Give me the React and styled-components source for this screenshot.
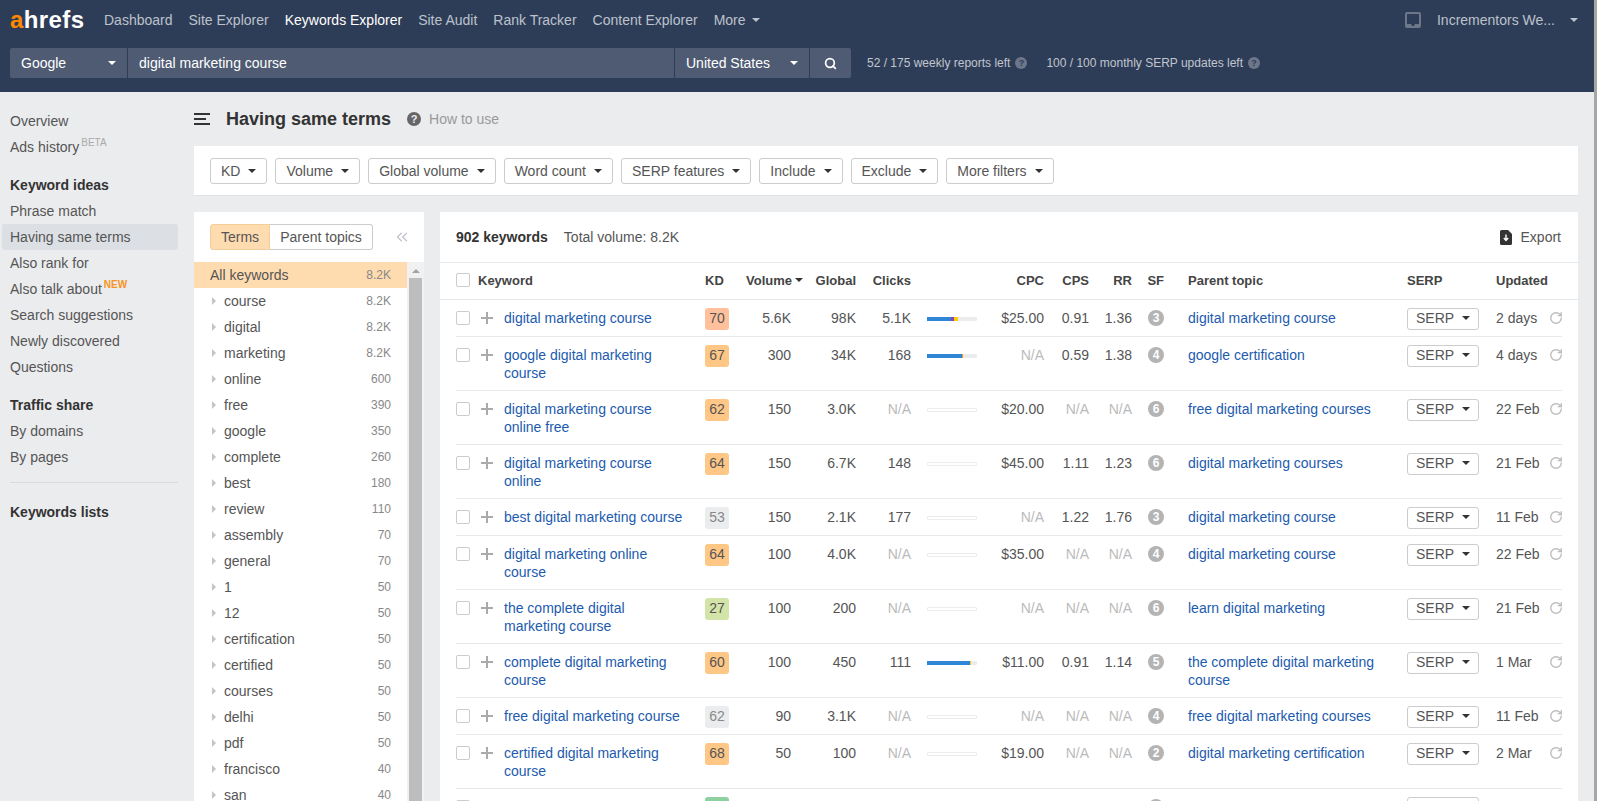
import React from 'react';
import styled, { createGlobalStyle } from 'styled-components';
import { ChevronsLeft, RotateCw, Search } from 'lucide-react';

const GlobalStyle = createGlobalStyle`
    html, body {
        margin: 0;
        height: 100%;
        overflow: hidden;
        background: #ebecee;
        font-family: 'Liberation Sans', Arial, sans-serif;
        font-size: 14px;
        color: #555;
    }
`;

const Screen = styled.div`
    display: flex;
    height: 801px;
    overflow: hidden;
`;

const Page = styled.div`
    flex: 1;
    min-width: 0;
    display: flex;
    flex-direction: column;
`;

const PageScrollbar = styled.div`
    width: 3px;
    background: #a6a6a6;
`;

const Header = styled.header`
    height: 92px;
    box-sizing: border-box;
    background: #2e3d57;
    padding: 0 16px 0 10px;
`;

const NavRow = styled.div`
    height: 40px;
    display: flex;
    align-items: center;
    color: #bcc2cd;
`;

const Logo = styled.div`
    width: 94px;
    font-size: 24px;
    font-weight: 700;
    letter-spacing: 0.4px;
    color: #fff;
    line-height: 36px;
    span {
        color: #ff8800;
    }
`;

const NavLink = styled.a`
    margin-right: 16px;
    color: ${(p) => (p.$active ? '#fff' : '#bcc2cd')};
    display: flex;
    align-items: center;
    gap: 6px;
`;

const Caret = styled.i`
    display: inline-block;
    width: 0;
    height: 0;
    flex: none;
    border-left: ${(p) => p.$size || 4}px solid transparent;
    border-right: ${(p) => p.$size || 4}px solid transparent;
    border-top: ${(p) => p.$size || 4}px solid ${(p) => p.$color || '#333'};
`;

const Account = styled.div`
    margin-left: auto;
    display: flex;
    align-items: center;
    color: #bcc2cd;
`;

const AccountName = styled.span`
    margin: 0 15px 0 16px;
`;

const SearchRow = styled.div`
    margin-top: 8px;
    display: flex;
    align-items: center;
    height: 30px;
    color: #fff;
`;

const SearchCell = styled.div`
    width: ${(p) => p.$width}px;
    height: 30px;
    box-sizing: border-box;
    background: #4e5b72;
    margin-right: 1px;
    padding: 0 11px;
    display: flex;
    align-items: center;
    justify-content: space-between;
    &:first-child {
        border-radius: 2px 0 0 2px;
    }
`;

const SearchButton = styled.button`
    width: 41px;
    height: 30px;
    border: 0;
    padding: 0;
    background: #4e5b72;
    border-radius: 0 2px 2px 0;
    color: #fff;
    display: flex;
    align-items: center;
    justify-content: center;
`;

const Quota = styled.div`
    margin-left: ${(p) => p.$left}px;
    display: flex;
    align-items: center;
    gap: 5px;
    font-size: 12px;
    color: #c0c5cf;
`;

const HelpDot = styled.span`
    width: ${(p) => p.$size}px;
    height: ${(p) => p.$size}px;
    border-radius: 50%;
    background: ${(p) => p.$bg};
    color: ${(p) => p.$fg};
    font-size: ${(p) => p.$size - 3}px;
    font-weight: 700;
    line-height: ${(p) => p.$size}px;
    text-align: center;
    flex: none;
`;

const Body = styled.div`
    flex: 1;
    min-height: 0;
    display: flex;
`;

const Sidebar = styled.nav`
    width: 194px;
    flex: none;
    box-sizing: border-box;
    padding: 16px 16px 0 2px;
`;

const SideGroup = styled.div`
    margin-bottom: ${(p) => p.$gap}px;
`;

const SideItem = styled.div`
    height: 26px;
    line-height: 26px;
    padding-left: 8px;
    border-radius: 3px;
    color: ${(p) => (p.$bold ? '#333' : '#555')};
    font-weight: ${(p) => (p.$bold ? 700 : 400)};
    background: ${(p) => (p.$active ? '#dcdfe4' : 'transparent')};
`;

const Sup = styled.sup`
    font-size: 10px;
    line-height: 0;
    vertical-align: 6px;
    margin-left: 2px;
    font-weight: ${(p) => (p.$new ? 700 : 400)};
    color: ${(p) => (p.$new ? '#f7931e' : '#aaa')};
`;

const SideRule = styled.hr`
    border: 0;
    border-top: 1px solid #d9dbdf;
    margin: 0 0 16px 8px;
`;

const Content = styled.main`
    flex: 1;
    min-width: 0;
    padding-right: 16px;
    display: flex;
    flex-direction: column;
`;

const TitleRow = styled.div`
    height: 54px;
    display: flex;
    align-items: center;
`;

const Title = styled.h1`
    margin: 0 16px 0 16px;
    font-size: 18px;
    line-height: 54px;
    color: #333;
`;

const HowTo = styled.span`
    margin-left: 8px;
    color: #999;
`;

const FilterBar = styled.div`
    height: 50px;
    box-sizing: border-box;
    flex: none;
    background: #fff;
    border-bottom: 1px solid #e2e3e6;
    padding: 12px 16px;
    display: flex;
    gap: 8px;
`;

const FilterButton = styled.button`
    height: 26px;
    box-sizing: border-box;
    padding: 0 10px;
    display: flex;
    align-items: center;
    gap: 8px;
    background: #fff;
    border: 1px solid #ccc;
    border-radius: 3px;
    color: #555;
    font: inherit;
`;

const Panels = styled.div`
    flex: 1;
    min-height: 0;
    margin-top: 16px;
    display: flex;
    gap: 16px;
`;

const TermsPanel = styled.aside`
    width: 230px;
    flex: none;
    background: #fff;
    display: flex;
    flex-direction: column;
    overflow: hidden;
`;

const TabsRow = styled.div`
    height: 50px;
    box-sizing: border-box;
    flex: none;
    padding: 12px 16px;
    display: flex;
    align-items: flex-start;
`;

const Tab = styled.div`
    height: 26px;
    box-sizing: border-box;
    padding: 0 10px;
    line-height: 24px;
    background: ${(p) => (p.$on ? '#ffdbb0' : '#fff')};
    border: 1px solid ${(p) => (p.$on ? '#f5cd9b' : '#ccc')};
    border-left-width: ${(p) => (p.$on ? 1 : 0)}px;
    border-radius: ${(p) => (p.$on ? '3px 0 0 3px' : '0 3px 3px 0')};
`;

const Collapse = styled.span`
    margin-left: auto;
    margin-right: -3px;
    height: 26px;
    display: flex;
    align-items: center;
    color: #c4c8ce;
`;

const TermsBody = styled.div`
    flex: 1;
    min-height: 0;
    display: flex;
`;

const TermsList = styled.div`
    flex: 1;
    min-width: 0;
`;

const TermRow = styled.div`
    height: 26px;
    box-sizing: border-box;
    padding: 0 16px;
    display: flex;
    align-items: center;
    background: ${(p) => (p.$on ? '#ffdbb0' : '#fff')};
`;

const TermArrow = styled.i`
    width: 0;
    height: 0;
    margin: 0 8px 0 2px;
    border-top: 4px solid transparent;
    border-bottom: 4px solid transparent;
    border-left: 4px solid #c4c4c4;
`;

const TermCount = styled.span`
    margin-left: auto;
    font-size: 12px;
    color: #888;
`;

const TermsTrack = styled.div`
    width: 17px;
    flex: none;
    background: #f1f1f1;
    display: flex;
    flex-direction: column;
    align-items: center;
`;

const TrackArrow = styled.i`
    width: 0;
    height: 0;
    margin: 7px 0 5px;
    border-left: 4px solid transparent;
    border-right: 4px solid transparent;
    border-bottom: 4px solid #a3a3a3;
`;

const TrackThumb = styled.div`
    width: 13px;
    flex: 1;
    background: #bdbdbd;
`;

const TablePanel = styled.section`
    flex: 1;
    min-width: 0;
    background: #fff;
    overflow: hidden;
`;

const TableTop = styled.div`
    height: 51px;
    box-sizing: border-box;
    padding: 0 17px 0 16px;
    border-bottom: 1px solid #e8e9eb;
    display: flex;
    align-items: center;
`;

const Count = styled.strong`
    color: #333;
    margin-right: 16px;
`;

const Export = styled.span`
    margin-left: auto;
    display: flex;
    align-items: center;
    gap: 9px;
`;

const columns = '22px 26px 201px 24px 62px 65px 55px 66px 67px 45px 43px 32px 243px 72px 70px 13px';

const HeadRow = styled.div`
    display: grid;
    grid-template-columns: ${columns};
    align-items: center;
    height: 37px;
    box-sizing: border-box;
    padding: 0 16px 2px;
    border-bottom: 1px solid #e8e9eb;
    font-size: 13px;
    font-weight: 700;
    color: #444;
`;

const HeadCell = styled.div`
    grid-column: ${(p) => p.$col};
    text-align: ${(p) => (p.$right ? 'right' : 'left')};
    padding-left: ${(p) => p.$pad || 0}px;
    white-space: nowrap;
`;

const VolumeHead = styled.div`
    grid-column: 5;
    margin-right: -12px;
    display: flex;
    justify-content: flex-end;
    align-items: center;
    gap: 3px;
`;

const Row = styled.div`
    display: grid;
    grid-template-columns: ${columns};
    align-items: start;
    margin: 0 16px;
    padding: 8px 0 6px;
    border-bottom: 1px solid #e8e9eb;
    line-height: 18px;
`;

const CheckBox = styled.span`
    display: block;
    width: 14px;
    height: 14px;
    box-sizing: border-box;
    border: 1px solid #ccc;
    border-radius: 2px;
    background: #fff;
    margin-top: ${(p) => p.$top || 0}px;
`;

const PlusIcon = styled.svg`
    display: block;
    margin: 4px 0 0 3px;
`;

const Keyword = styled.a`
    display: block;
    padding: 1px 16px 2px 0;
    color: #1c5bae;
`;

const Badge = styled.div`
    width: 24px;
    height: 22px;
    line-height: 21px;
    border-radius: 3px;
    text-align: center;
    background: ${(p) => p.$bg};
    color: ${(p) => (p.$muted ? '#888' : '#555')};
`;

const Value = styled.div`
    padding-top: 1px;
    text-align: right;
    color: ${(p) => (p.$na ? '#bbb' : '#555')};
`;

const BarTrack = styled.div`
    width: 50px;
    height: 4px;
    margin: 9px 0 0 16px;
    box-sizing: border-box;
    display: flex;
    background: ${(p) => (p.$empty ? '#fff' : '#ebecee')};
    border: ${(p) => (p.$empty ? '1px solid #ebecee' : '0')};
    border-radius: 1px;
`;

const BarPart = styled.span`
    height: 100%;
    background: ${(p) => p.$color};
`;

const SfDot = styled.div`
    justify-self: end;
    width: 16px;
    height: 16px;
    margin-top: 2px;
    border-radius: 50%;
    background: #b4b4b4;
    color: #fff;
    font-size: 12px;
    font-weight: 700;
    line-height: 16px;
    text-align: center;
`;

const Parent = styled.a`
    display: block;
    padding: 1px 16px 2px 24px;
    color: #1c5bae;
`;

const SerpButton = styled.button`
    width: 72px;
    height: 22px;
    box-sizing: border-box;
    padding: 0 8px 2px;
    display: flex;
    align-items: center;
    justify-content: space-between;
    background: #fff;
    border: 1px solid #ccc;
    border-radius: 3px;
    color: #555;
    font: inherit;
`;

const Updated = styled.div`
    padding: 1px 0 0 17px;
    white-space: nowrap;
`;

const Refresh = styled.div`
    padding-top: 3px;
    color: #bdbdbd;
`;

const terms = [
    ['course', '8.2K'], ['digital', '8.2K'], ['marketing', '8.2K'], ['online', '600'], ['free', '390'],
    ['google', '350'], ['complete', '260'], ['best', '180'], ['review', '110'], ['assembly', '70'],
    ['general', '70'], ['1', '50'], ['12', '50'], ['certification', '50'], ['certified', '50'],
    ['courses', '50'], ['delhi', '50'], ['pdf', '50'], ['francisco', '40'], ['san', '40'],
];

const filters = ['KD', 'Volume', 'Global volume', 'Word count', 'SERP features', 'Include', 'Exclude', 'More filters'];

const ORANGE = '#ffc785';
const GREY = '#ebecee';

const rows = [
    { kw: 'digital marketing course', kd: 70, bg: '#ffc09b', vol: '5.6K', global: '98K', clicks: '5.1K', bar: [[24, '#2f86d6'], [3, '#8e44ad'], [4, '#ffcc00']], cpc: '$25.00', cps: '0.91', rr: '1.36', sf: 3, parent: 'digital marketing course', date: '2 days' },
    { kw: 'google digital marketing course', kd: 67, bg: ORANGE, vol: '300', global: '34K', clicks: '168', bar: [[35, '#2f86d6'], [1, '#ff9800']], cpc: 'N/A', cps: '0.59', rr: '1.38', sf: 4, parent: 'google certification', date: '4 days' },
    { kw: 'digital marketing course online free', kd: 62, bg: ORANGE, vol: '150', global: '3.0K', clicks: 'N/A', cpc: '$20.00', cps: 'N/A', rr: 'N/A', sf: 6, parent: 'free digital marketing courses', date: '22 Feb' },
    { kw: 'digital marketing course online', kd: 64, bg: ORANGE, vol: '150', global: '6.7K', clicks: '148', cpc: '$45.00', cps: '1.11', rr: '1.23', sf: 6, parent: 'digital marketing courses', date: '21 Feb' },
    { kw: 'best digital marketing course', kd: 53, bg: GREY, muted: true, vol: '150', global: '2.1K', clicks: '177', cpc: 'N/A', cps: '1.22', rr: '1.76', sf: 3, parent: 'digital marketing course', date: '11 Feb' },
    { kw: 'digital marketing online course', kd: 64, bg: ORANGE, vol: '100', global: '4.0K', clicks: 'N/A', cpc: '$35.00', cps: 'N/A', rr: 'N/A', sf: 4, parent: 'digital marketing course', date: '22 Feb' },
    { kw: 'the complete digital marketing course', kd: 27, bg: '#d3e4a8', vol: '100', global: '200', clicks: 'N/A', cpc: 'N/A', cps: 'N/A', rr: 'N/A', sf: 6, parent: 'learn digital marketing', date: '21 Feb' },
    { kw: 'complete digital marketing course', kd: 60, bg: ORANGE, vol: '100', global: '450', clicks: '111', bar: [[43, '#2f86d6'], [1, '#ffcc00']], cpc: '$11.00', cps: '0.91', rr: '1.14', sf: 5, parent: 'the complete digital marketing course', date: '1 Mar' },
    { kw: 'free digital marketing course', kd: 62, bg: GREY, muted: true, vol: '90', global: '3.1K', clicks: 'N/A', cpc: 'N/A', cps: 'N/A', rr: 'N/A', sf: 4, parent: 'free digital marketing courses', date: '11 Feb' },
    { kw: 'certified digital marketing course', kd: 68, bg: ORANGE, vol: '50', global: '100', clicks: 'N/A', cpc: '$19.00', cps: 'N/A', rr: 'N/A', sf: 2, parent: 'digital marketing certification', date: '2 Mar' },
];

const KeywordRow = ({ row }) => (
    <Row>
        <CheckBox $top={3} />
        <PlusIcon width="12" height="12" viewBox="0 0 12 12">
            <path d="M6 0v12M0 6h12" stroke="#aaa" strokeWidth="2" />
        </PlusIcon>
        <Keyword>{row.kw}</Keyword>
        <Badge $bg={row.bg} $muted={row.muted}>{row.kd}</Badge>
        <Value>{row.vol}</Value>
        <Value>{row.global}</Value>
        <Value $na={row.clicks === 'N/A'}>{row.clicks}</Value>
        <BarTrack $empty={!row.bar}>
            {row.bar && row.bar.map(([w, c]) => <BarPart key={c} $color={c} style={{ width: w }} />)}
        </BarTrack>
        <Value $na={row.cpc === 'N/A'}>{row.cpc}</Value>
        <Value $na={row.cps === 'N/A'}>{row.cps}</Value>
        <Value $na={row.rr === 'N/A'}>{row.rr}</Value>
        <SfDot>{row.sf}</SfDot>
        <Parent>{row.parent}</Parent>
        <SerpButton>SERP <Caret /></SerpButton>
        <Updated>{row.date}</Updated>
        <Refresh><RotateCw size={14} strokeWidth={2.4} /></Refresh>
    </Row>
);

const App = () => (
    <Screen>
        <GlobalStyle />
        <Page>
            <Header>
                <NavRow>
                    <Logo><span>a</span>hrefs</Logo>
                    <NavLink>Dashboard</NavLink>
                    <NavLink>Site Explorer</NavLink>
                    <NavLink $active>Keywords Explorer</NavLink>
                    <NavLink>Site Audit</NavLink>
                    <NavLink>Rank Tracker</NavLink>
                    <NavLink>Content Explorer</NavLink>
                    <NavLink>More <Caret $color="#bcc2cd" /></NavLink>
                    <Account>
                        <svg width="16" height="16" viewBox="0 0 16 16">
                            <path fillRule="evenodd" d="M2 0h12a2 2 0 0 1 2 2v12a2 2 0 0 1-2 2H2a2 2 0 0 1-2-2V2a2 2 0 0 1 2-2zm0 2v10h4l1 2h2l1-2h4V2z" fill="#6d7789" />
                        </svg>
                        <AccountName>Incrementors We...</AccountName>
                        <Caret $color="#bcc2cd" />
                    </Account>
                </NavRow>
                <SearchRow>
                    <SearchCell $width={117}>Google <Caret $color="#fff" /></SearchCell>
                    <SearchCell $width={546}>digital marketing course</SearchCell>
                    <SearchCell $width={134}>United States <Caret $color="#fff" /></SearchCell>
                    <SearchButton><Search size={13} strokeWidth={3.2} /></SearchButton>
                    <Quota $left={16}>
                        52 / 175 weekly reports left
                        <HelpDot $size={12} $bg="#6d7789" $fg="#2e3d57">?</HelpDot>
                    </Quota>
                    <Quota $left={19}>
                        100 / 100 monthly SERP updates left
                        <HelpDot $size={12} $bg="#6d7789" $fg="#2e3d57">?</HelpDot>
                    </Quota>
                </SearchRow>
            </Header>
            <Body>
                <Sidebar>
                    <SideGroup $gap={12}>
                        <SideItem>Overview</SideItem>
                        <SideItem>Ads history<Sup>BETA</Sup></SideItem>
                    </SideGroup>
                    <SideGroup $gap={12}>
                        <SideItem $bold>Keyword ideas</SideItem>
                        <SideItem>Phrase match</SideItem>
                        <SideItem $active>Having same terms</SideItem>
                        <SideItem>Also rank for</SideItem>
                        <SideItem>Also talk about<Sup $new>NEW</Sup></SideItem>
                        <SideItem>Search suggestions</SideItem>
                        <SideItem>Newly discovered</SideItem>
                        <SideItem>Questions</SideItem>
                    </SideGroup>
                    <SideGroup $gap={12}>
                        <SideItem $bold>Traffic share</SideItem>
                        <SideItem>By domains</SideItem>
                        <SideItem>By pages</SideItem>
                    </SideGroup>
                    <SideRule />
                    <SideItem $bold>Keywords lists</SideItem>
                </Sidebar>
                <Content>
                    <TitleRow>
                        <svg width="16" height="12" viewBox="0 0 16 12">
                            <path d="M0 1h16M0 6h12M0 11h16" stroke="#333" strokeWidth="2" />
                        </svg>
                        <Title>Having same terms</Title>
                        <HelpDot $size={14} $bg="#666" $fg="#ebecee">?</HelpDot>
                        <HowTo>How to use</HowTo>
                    </TitleRow>
                    <FilterBar>
                        {filters.map((f) => (
                            <FilterButton key={f}>{f} <Caret /></FilterButton>
                        ))}
                    </FilterBar>
                    <Panels>
                        <TermsPanel>
                            <TabsRow>
                                <Tab $on>Terms</Tab>
                                <Tab>Parent topics</Tab>
                                <Collapse><ChevronsLeft size={18} strokeWidth={2} /></Collapse>
                            </TabsRow>
                            <TermsBody>
                                <TermsList>
                                    <TermRow $on>All keywords<TermCount>8.2K</TermCount></TermRow>
                                    {terms.map(([name, count]) => (
                                        <TermRow key={name}>
                                            <TermArrow />
                                            {name}
                                            <TermCount>{count}</TermCount>
                                        </TermRow>
                                    ))}
                                </TermsList>
                                <TermsTrack>
                                    <TrackArrow />
                                    <TrackThumb />
                                </TermsTrack>
                            </TermsBody>
                        </TermsPanel>
                        <TablePanel>
                            <TableTop>
                                <Count>902 keywords</Count>
                                Total volume: 8.2K
                                <Export>
                                    <svg width="12" height="15" viewBox="0 0 12 15">
                                        <path d="M1.5 0H8l4 4v9.5a1.5 1.5 0 0 1-1.5 1.5h-9A1.5 1.5 0 0 1 0 13.5v-12A1.5 1.5 0 0 1 1.5 0z" fill="#333" />
                                        <path d="M6 4.5v5M3.8 8L6 10.5 8.2 8" stroke="#fff" strokeWidth="1.4" fill="none" />
                                    </svg>
                                    Export
                                </Export>
                            </TableTop>
                            <HeadRow>
                                <CheckBox />
                                <HeadCell $col="2 / 4">Keyword</HeadCell>
                                <HeadCell $col="4">KD</HeadCell>
                                <VolumeHead>Volume <Caret /></VolumeHead>
                                <HeadCell $col="6" $right>Global</HeadCell>
                                <HeadCell $col="7" $right>Clicks</HeadCell>
                                <HeadCell $col="9" $right>CPC</HeadCell>
                                <HeadCell $col="10" $right>CPS</HeadCell>
                                <HeadCell $col="11" $right>RR</HeadCell>
                                <HeadCell $col="12" $right>SF</HeadCell>
                                <HeadCell $col="13" $pad={24}>Parent topic</HeadCell>
                                <HeadCell $col="14">SERP</HeadCell>
                                <HeadCell $col="15" $pad={17}>Updated</HeadCell>
                            </HeadRow>
                            {rows.map((row) => <KeywordRow key={row.kw} row={row} />)}
                            <Row>
                                <CheckBox $top={3} />
                                <span />
                                <span />
                                <Badge $bg="#8fd0a2" />
                                <Value />
                                <Value />
                                <Value />
                                <span />
                                <Value />
                                <Value />
                                <Value />
                                <SfDot />
                                <span />
                                <SerpButton />
                            </Row>
                        </TablePanel>
                    </Panels>
                </Content>
            </Body>
        </Page>
        <PageScrollbar />
    </Screen>
);

export default App;
